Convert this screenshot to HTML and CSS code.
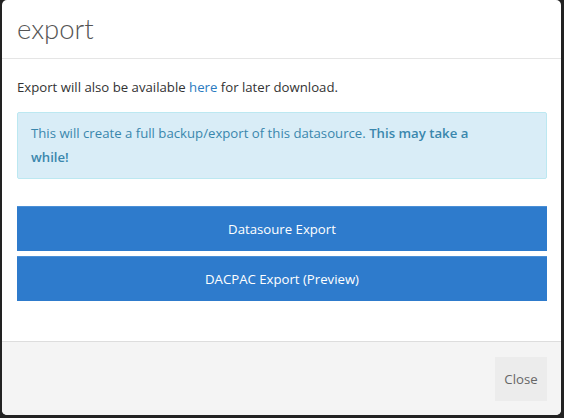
FILE: index.html
```html
<!DOCTYPE html>
<html>
<head>
<meta charset="utf-8">
<title>export</title>
<link rel="stylesheet" href="styles.css">
</head>
<body>

<div class="modal">
  <div class="modal-header">
    <h4 class="modal-title">export</h4>
  </div>

  <div class="modal-body">
    <p class="lead">Export will also be available <a href="#">here</a> for later download.</p>
    <div class="alert alert-info">This will create a full backup/export of this datasource. <strong>This may take a while!</strong></div>
    <a href="#" class="btn btn-primary">Datasoure Export</a>
    <a href="#" class="btn btn-primary">DACPAC Export (Preview)</a>
  </div>

  <div class="modal-footer">
    <a href="#" class="btn btn-default">Close</a>
  </div>
</div>

</body>
</html>
```

FILE: styles.css
```css
html, body { height:100%; }
body { margin:0; padding:0 3px 3px 2px; box-sizing:border-box; background:#222; font-family:"Open Sans", "Noto Sans", sans-serif; font-size:13.2px; color:#333; }
a { color:#2a7ac0; text-decoration:none; }

.modal { height:100%; background:#fff; border-radius:5px; display:flex; flex-direction:column; overflow:hidden; }
.modal-header { padding:13px 15px 14px; border-bottom:1px solid #e5e5e5; }
.modal-title { margin:0; font-family:"Lato", "Open Sans", sans-serif; font-size:27.5px; line-height:31px; font-weight:300; color:#555; }

.modal-body { flex:1; padding:17px 14px 0 15px; }
.lead { margin:0 0 14px; line-height:22px; }

.alert { margin:0 0 27px; padding:8px 60px 9px 13px; line-height:24px; border:1px solid #bce8f1; border-radius:2px; }
.alert-info { background:#d9edf7; color:#3a87ad; }
.alert strong { font-weight:600; }

.btn { display:block; text-align:center; }
.btn-primary { height:45px; line-height:45px; margin-bottom:5px; background:#2e7bcc; border-top:1px solid #4a8fd6; box-sizing:border-box; color:#fff; }

.modal-footer { height:74px; padding:15px 14px 0 0; box-sizing:border-box; background:#f4f4f4; border-top:1px solid #ddd; display:flex; justify-content:flex-end; align-items:flex-start; }
.btn-default { width:52px; height:44px; line-height:44px; background:#ececec; color:#666; }
```
